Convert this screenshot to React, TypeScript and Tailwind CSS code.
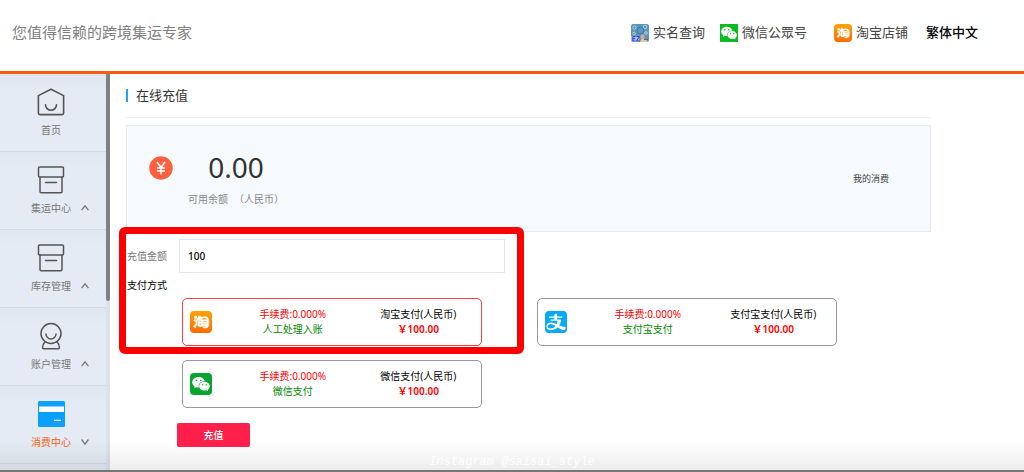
import { useState } from 'react';
import { AiFillWechat, AiOutlineAlipay, AiOutlineTaobao } from 'react-icons/ai';

type PayKey = 'taobao' | 'alipay' | 'wechat';

interface PayMethod {
  key: PayKey;
  title: string;
  note: string;
}

const payMethods: PayMethod[] = [
  { key: 'taobao', title: '淘宝支付(人民币)', note: '人工处理入账' },
  { key: 'alipay', title: '支付宝支付(人民币)', note: '支付宝支付' },
  { key: 'wechat', title: '微信支付(人民币)', note: '微信支付' }
];

const HomeIcon = () => (
  <svg width="28" height="28" viewBox="0 0 28 28" fill="none" stroke="#555" strokeWidth="1.6" strokeLinejoin="round" strokeLinecap="round">
    <path d="M14 1.2 26.6 7.6V25a1.6 1.6 0 0 1-1.6 1.6H3A1.6 1.6 0 0 1 1.4 25V7.6Z" />
    <path d="M8.5 16.8a5.5 5.5 0 0 0 11 0" />
  </svg>
);

const BoxIcon = () => (
  <svg width="28" height="28" viewBox="0 0 28 28" fill="none" stroke="#555" strokeWidth="1.5" strokeLinejoin="round" strokeLinecap="round">
    <rect x="1.5" y="1" width="25" height="10" rx="1" />
    <path d="M3 11v14.5a1.2 1.2 0 0 0 1.2 1.2h19.6a1.2 1.2 0 0 0 1.2-1.2V11M8.500 16.500h11" />
  </svg>
);

const AccountIcon = () => (
  <svg width="28" height="28" viewBox="0 0 28 28" fill="none" stroke="#555" strokeWidth="1.5" strokeLinejoin="round" strokeLinecap="round">
    <circle cx="14" cy="11.5" r="10" />
    <path d="M9 12a5 5 0 0 0 10 0M8 19.7c-1.4 1.4-2.2 3.3-2.4 5.8a1 1 0 0 0 1 1.2h14.800a1 1 0 0 0 1-1.2c-.2-2.5-1-4.400-2.400-5.800" />
  </svg>
);

const CardIcon = () => (
  <svg width="28" height="28" viewBox="0 0 28 28">
    <rect x="1" y="1" width="27" height="26" rx="1.5" fill="#0aa0fb" />
    <path d="M2 6.5h25V12H2zM17 19.7h7V21h-7z" fill="#fff" />
  </svg>
);

const Chevron = ({ open }: { open: boolean }) => (
  <svg width="8" height="8" viewBox="0 0 8 8" fill="none" stroke="#777" strokeWidth="1.3">
    <path d={open ? 'M.6 1.500 4 6.200 7.400 1.500' : 'M.6 6.200 4 1.800 7.400 6.200'} />
  </svg>
);

const RealNameIcon = () => (
  <svg width="18" height="18" viewBox="0 0 18 18">
    <rect width="18" height="18" rx="2" fill="#5c98bd" />
    <g fill="none" stroke="#b4ccd9">
      <circle cx="3.5" cy="3.5" r="1.6" />
      <circle cx="14" cy="3" r="1.8" />
      <circle cx="3" cy="9.5" r="1.3" />
      <circle cx="15" cy="9" r="1.3" />
      <circle cx="9.5" cy="6.5" r="3.4" stroke="#3e7ba6" />
    </g>
    <path d="M0 12h8v6H2a2 2 0 0 1-2-2z" fill="#a9bbea" />
    <path d="M4.5 12.500H1.800v4.500h2.700M1.800 14.700h2.400M5.500 12.500h3l-3 4.500h3" fill="none" stroke="#3342d8" />
    <circle cx="11.5" cy="12.5" r="2" fill="#eca77c" />
    <path d="M9 18l1.500-3.500h3L17 18z" fill="#dfc9a6" />
    <path d="M13 15.500h4" stroke="#6b6257" />
  </svg>
);

const PayLogo = ({ type }: { type: PayKey }) => {
  if (type === 'taobao') {
    return (
      <span className="flex size-[22px] items-center justify-center rounded bg-linear-to-b from-[#ffa200] to-[#ff6a00] text-white">
        <AiOutlineTaobao size={20} strokeWidth={35} />
      </span>
    );
  }
  if (type === 'alipay') {
    return (
      <span className="flex size-[22px] items-center justify-center overflow-hidden rounded-sm bg-[#06a8f8] text-white">
        <AiOutlineAlipay size={22} />
      </span>
    );
  }
  return (
    <span className="flex size-[22px] items-center justify-center rounded-sm bg-[#07a52e] text-white">
      <AiFillWechat size={20} />
    </span>
  );
};

const menus = [
  { label: '首页', icon: <HomeIcon />, arrow: false, active: false },
  { label: '集运中心', icon: <BoxIcon />, arrow: true, active: false },
  { label: '库存管理', icon: <BoxIcon />, arrow: true, active: false },
  { label: '账户管理', icon: <AccountIcon />, arrow: true, active: false },
  { label: '消费中心', icon: <CardIcon />, arrow: true, active: true }
];

const Header = () => (
  <header className="flex h-[74px] shrink-0 items-center justify-between border-b-3 border-[#ff5a0a] pr-[46px] pb-1.5 pl-3">
    <p className="text-[15px] text-[#808080]">您值得信赖的跨境集运专家</p>
    <nav className="flex items-center text-[13px] text-[#444]">
      <a href="#" className="mr-[15px] flex items-center gap-1">
        <RealNameIcon />
        实名查询
      </a>
      <a href="#" className="mr-[27px] flex items-center gap-1">
        <span className="flex size-[18px] items-center justify-center bg-[#09bb1f] text-white">
          <AiFillWechat size={18} />
        </span>
        微信公眾号
      </a>
      <a href="#" className="mr-[18px] flex items-center gap-1">
        <span className="flex size-[18px] items-center justify-center rounded bg-linear-to-b from-[#ffa200] to-[#ff6a00] text-white">
          <AiOutlineTaobao size={16} strokeWidth={35} />
        </span>
        淘宝店铺
      </a>
      <a href="#" className="font-medium text-black">繁体中文</a>
    </nav>
  </header>
);

const Sidebar = () => (
  <aside className="flex w-[110px] shrink-0 overflow-hidden bg-[#e3eaf3]">
    <ul className="flex-1">
      {menus.map((menu) => (
        <li key={menu.label} className="h-[78px] border-b border-[#d3dae4] bg-linear-to-b from-[#dfe6f0] to-[#e4ebf4] to-20%">
          <a href="#" className="flex flex-col items-center gap-1.5 pt-[14px] pr-1">
            {menu.icon}
            <span className="grid grid-cols-[1fr_auto_1fr] items-center gap-2.5 self-stretch text-[10px] leading-4">
              <span className={menu.active ? 'col-start-2 text-[#ff6112]' : 'col-start-2 text-[#777]'}>{menu.label}</span>
              {menu.arrow && <Chevron open={menu.active} />}
            </span>
          </a>
        </li>
      ))}
    </ul>
    {/* 滚动条 */}
    <div className="w-1 bg-[#dde2ea]">
      <div className="h-[57%] rounded-b-sm bg-[#808080]" />
    </div>
  </aside>
);

export default function App() {
  const [amount, setAmount] = useState('100');
  const [method, setMethod] = useState<PayKey>('taobao');

  const price = (Number(amount) || 0).toFixed(2);

  return (
    <div className="relative flex h-screen flex-col overflow-hidden bg-white font-['Noto_Sans','Noto_Sans_CJK_SC',sans-serif]">
      <Header />
      <div className="flex min-h-0 flex-1">
        <Sidebar />
        <main className="min-w-0 flex-1 px-4">
          <div className="max-w-[805px]">
            <div className="flex h-11 items-center gap-2 border-b border-[#eceff5]">
              <span className="h-[13px] w-0.5 bg-[#1aa3ff]" />
              <h1 className="text-[13px] text-[#333]">在线充值</h1>
            </div>

            {/* 余额 */}
            <section className="mt-[7px] flex h-[107px] items-center border border-[#e6eaf1] bg-[#f6fafd] pr-[41px] pl-[22px]">
              <span className="mb-[22px] bg-white">
                <svg width="24" height="24" viewBox="0 0 24 24" className="block">
                  <circle cx="12" cy="12" r="11.8" fill="#ff6040" />
                  <path d="M8 6l4 5.500L16 6M12 11.500V18.500M8 12h8M8 15h8" fill="none" stroke="#fff" strokeWidth="1.6" />
                </svg>
              </span>
              <div className="mb-1 ml-[15px] text-center">
                <p className="text-[28px] leading-10 text-[#333]">0.00</p>
                <p className="mt-1 flex gap-1.5 text-[10px] leading-4 text-[#888]">
                  <span>可用余额</span>
                  <span>（人民币）</span>
                </p>
              </div>
              <a href="#" className="ml-auto text-[9px] text-[#444]">我的消费</a>
            </section>

            <form onSubmit={(e) => e.preventDefault()}>
              <div className="relative pt-[7px]">
                <div className="flex items-center text-[10px]">
                  <label htmlFor="amount" className="w-[53px] pl-px text-[#777]">充值金额</label>
                  <input
                    id="amount"
                    type="text"
                    value={amount}
                    onChange={(e) => setAmount(e.target.value)}
                    className="h-[34px] w-[326px] border border-[#e3e7ef] px-2 font-medium text-black outline-none"
                  />
                </div>

                <fieldset>
                  <legend className="pt-1 pl-px text-[10px] leading-4 text-black">支付方式</legend>
                  <div className="mt-[5px] ml-14 flex flex-wrap gap-x-[55px] gap-y-[14px]">
                    {payMethods.map((item) => (
                      <label
                        key={item.key}
                        className={`grid h-12 w-[300px] cursor-pointer grid-cols-[47px_1fr_1fr] items-center rounded-[5px] border text-center text-[10px] leading-[15px] ${
                          method === item.key ? 'border-[#ff4040]' : 'border-[#999]'
                        }`}
                      >
                        <input
                          type="radio"
                          name="method"
                          className="sr-only"
                          checked={method === item.key}
                          onChange={() => setMethod(item.key)}
                        />
                        <span className="pl-[7px]">
                          <PayLogo type={item.key} />
                        </span>
                        <span>
                          <span className="block text-[#f00]">手续费:0.000%</span>
                          <span className="block text-[#008a00]">{item.note}</span>
                        </span>
                        <span>
                          <span className="block text-black">{item.title}</span>
                          <span className="block font-semibold text-[#f00]">￥{price}</span>
                        </span>
                      </label>
                    ))}
                  </div>
                </fieldset>

                {/* 红色标注框 */}
                <div className="pointer-events-none absolute -top-[5px] -left-[7px] h-[127px] w-[405px] rounded-md border-7 border-[#f00]" />
              </div>

              <button type="submit" className="mt-[15px] ml-[51px] h-6 w-[73px] rounded-xs bg-[#ff1f4b] text-[10px] font-medium text-white">
                充值
              </button>
            </form>
          </div>
        </main>
      </div>

      {/* 底部渐变和水印 */}
      <div className="pointer-events-none absolute inset-x-0 bottom-0 flex h-8 items-end justify-center border-b-2 border-[#777] bg-linear-to-b from-transparent to-black/7">
        <p className="font-['Liberation_Mono',monospace] text-[12px] leading-4 text-white italic">Instagram @saisai_style</p>
      </div>
    </div>
  );
}
